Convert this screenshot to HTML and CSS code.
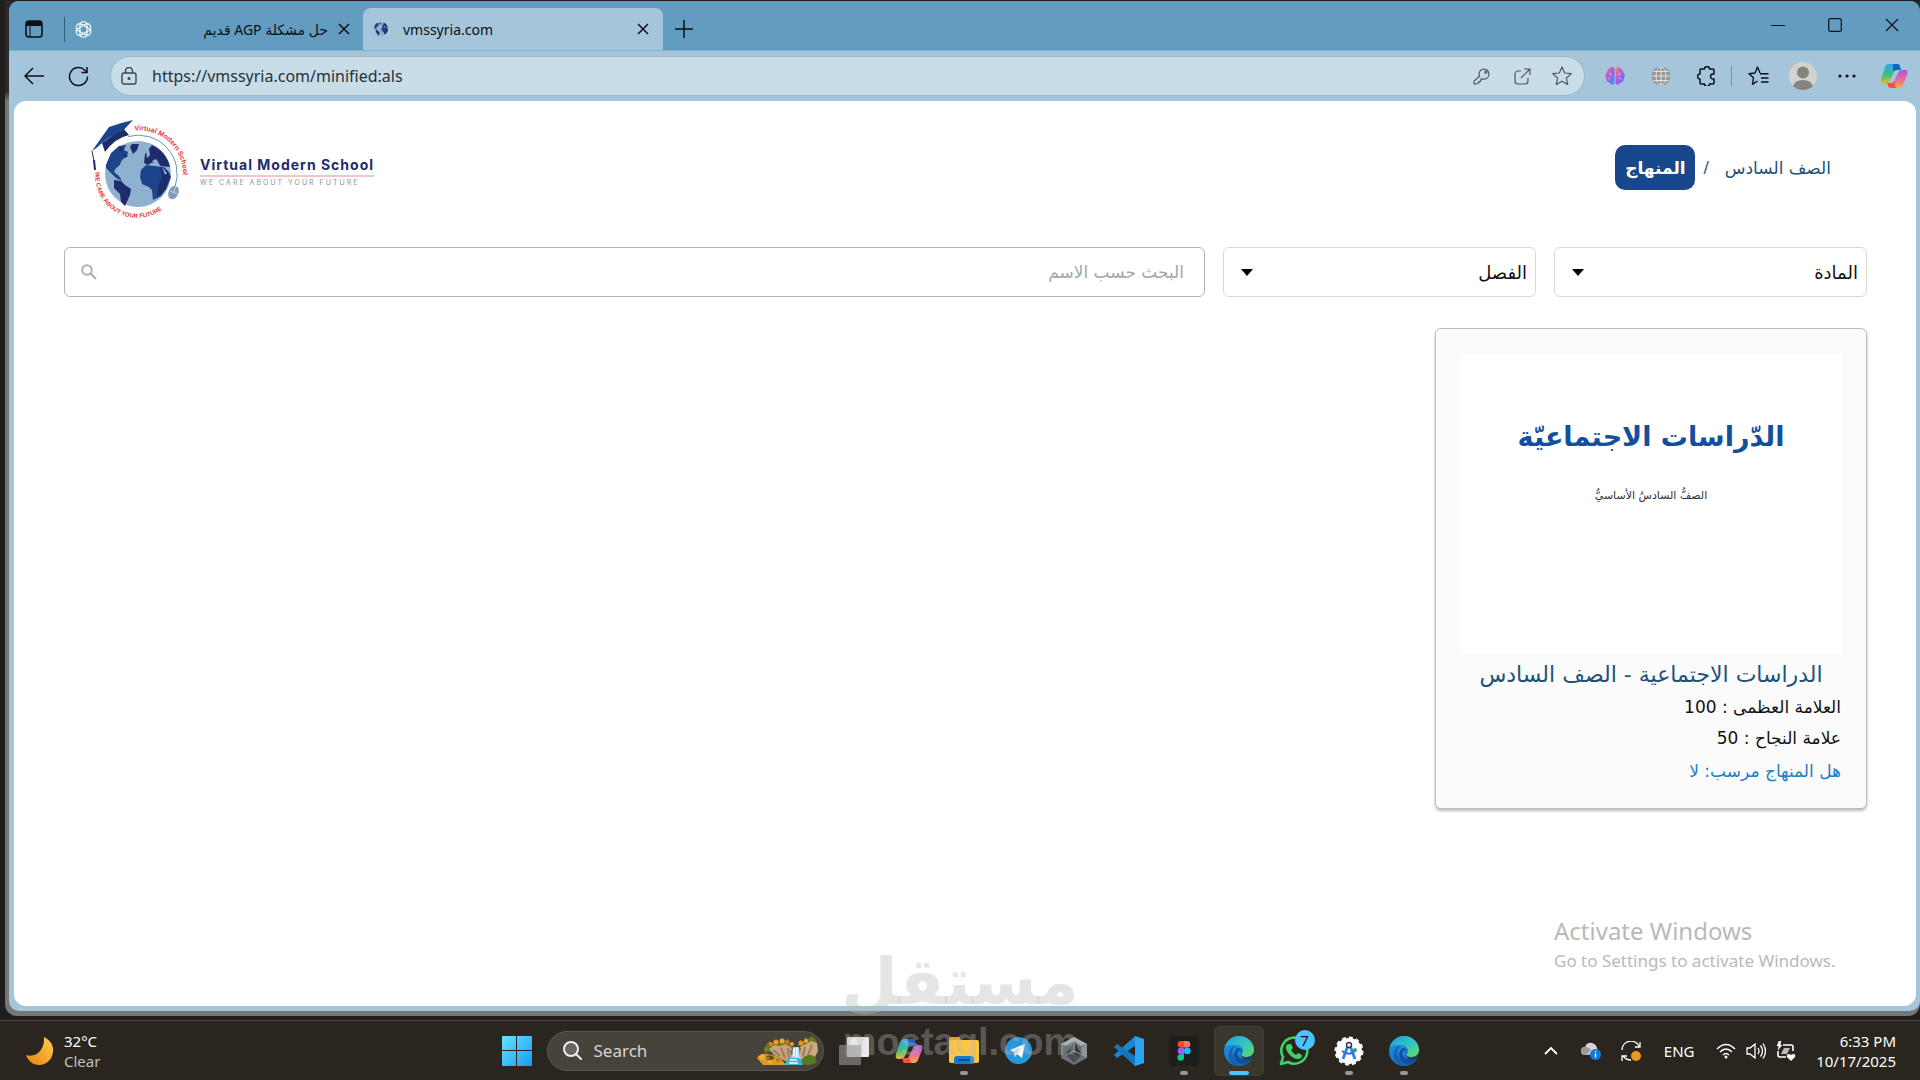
FILE: index.html
```html
<!DOCTYPE html>
<html lang="en">
<head>
<meta charset="utf-8">
<title>vmssyria.com</title>
<link rel="stylesheet" href="styles.css">
</head>
<body>
<svg class="defs" width="0" height="0" aria-hidden="true">
  <defs>
    <linearGradient id="edgeGreen" x1="0" y1="0" x2="1" y2="1"><stop offset="0" stop-color="#1c9de0"/><stop offset=".5" stop-color="#34c3c4"/><stop offset="1" stop-color="#62dc58"/></linearGradient>
    <linearGradient id="edgeBlue" x1="0" y1="0" x2="0" y2="1"><stop offset="0" stop-color="#1f93dd"/><stop offset="1" stop-color="#1678cd"/></linearGradient>
    <linearGradient id="copA" x1="0" y1="0" x2="0" y2="1"><stop offset="0" stop-color="#2aa7f0"/><stop offset=".55" stop-color="#3fbf83"/><stop offset="1" stop-color="#f0bd2d"/></linearGradient>
    <linearGradient id="copB" x1="0" y1="0" x2="0" y2="1"><stop offset="0" stop-color="#a25be8"/><stop offset=".55" stop-color="#ee6a97"/><stop offset="1" stop-color="#f8b13f"/></linearGradient>
    <linearGradient id="winTile" x1="0" y1="0" x2="1" y2="1"><stop offset="0" stop-color="#66e2ff"/><stop offset="1" stop-color="#1a9af0"/></linearGradient>
    <linearGradient id="brainFill" x1="0" y1="0" x2="1" y2="1"><stop offset="0" stop-color="#f2a03c"/><stop offset=".3" stop-color="#d65bc4"/><stop offset=".7" stop-color="#7b67f2"/><stop offset="1" stop-color="#25b5f5"/></linearGradient>
    <linearGradient id="moonFill" x1="1" y1="0" x2="0" y2="1"><stop offset="0" stop-color="#ffd05a"/><stop offset=".6" stop-color="#f0a022"/><stop offset="1" stop-color="#e8831f"/></linearGradient>
    <symbol id="edge" viewBox="0 0 30 30">
      <circle cx="15" cy="15" r="15" fill="url(#edgeBlue)"/>
      <path d="M1 11C3 4 9 0 15 0c9 0 15 7 15 14 0 5-4 7-8 7-3 0-5-1-4-3 3-5-1-9-6-9-5 0-9 0-11 2z" fill="url(#edgeGreen)"/>
      <path d="M12 9c-4 2-6 10 0 15 5 4 11 3 15 0-3 4-7 6-12 6C8 30 3 23 5 16c1-4 4-6 7-7z" fill="#1563b5"/>
      <path d="M17 14c-3 0-5 3-3 6 3 4 9 4 13 2 2-1 1 2 0 2-4 5-12 5-15 0-3-4-2-10 2-12 2 0 4 1 4 4 0 1-1 2-1 3z" fill="#124e9c"/>
      <path d="M18 18c-1 2 1 3 4 3s7-1 8-6c1 5-1 7-3 8-5 2-11 0-9-5z" fill="#2a261f" opacity=".7"/>
    </symbol>
    <symbol id="copilot" viewBox="0 0 28 26">
      <path d="M9 1h8c2 0 3 1 3 3l1 3h-4c-2 0-3 1-4 4l-3 7c-1 2-2 3-5 3H4c-3 0-4-2-3-5L5 4c1-2 2-3 4-3z" fill="url(#copA)"/>
      <path d="M13 1h4c2 0 3 1 3 3l1 3h-4c-2 0-3 1-4 2z" fill="#1565c2"/>
      <path d="M19 25h-8c-2 0-3-1-3-3l-1-2h4c2 0 3-1 4-4l3-6c1-2 2-3 5-3h2c3 0 3 2 2 5l-4 10c-1 2-2 3-4 3z" fill="url(#copB)"/>
      <path d="M7 20h4c2 0 2 0 3-2l2 7h-5c-2 0-3-1-3-3z" fill="#ee5340"/>
    </symbol>
    <symbol id="globe" viewBox="0 0 66 66">
      <circle cx="33" cy="33" r="33" fill="#8fb1d0"/>
      <path d="M1 24L6 12l8-7 7-1-2 5 4 2-1 4-5 4-3 6-3 2-2 4 5 4 3 5-6-3-6-6-4-4z" fill="#1d438a"/>
      <path d="M14 5l5 3-4 3zM19 13l4 2-3 2zM25 6l2-3 7 0-2 6-4 4z" fill="#1f2c6b"/>
      <path d="M9 39l7 1 4 4 6 4-1 6-5 11-4-4-1-8-6-6z" fill="#1f2c6b"/>
      <path d="M39 22l1-9 7-9c9 4 16 12 18 22l-9-1-4-4-6 1-3 2z" fill="#1f2c6b"/>
      <path d="M36 29l5-5 8 1 10 1 5 5 2 5-5 12-5 7-8 4-1-10-3-3-7-3-2-7z" fill="#1d438a"/>
      <path d="M55 26l7 3 3 8-4 11-9 9 1-12 4-8z" fill="#1f2c6b"/>
      <path d="M41 10l3-2 1 6-3 3zM47 20l4-2 3 4-2 2-3-2zM57 26l5 6-2 2z" fill="#8fb1d0"/>
    </symbol>
  </defs>
</svg>

<div class="desktop">
<div class="window">
  <div class="tabbar">
    <button class="icon-btn workspace" aria-label="Tab actions"><svg width="18" height="18" viewBox="0 0 18 18"><rect x="1" y="1" width="16" height="16" rx="3" fill="none" stroke="#0b1116" stroke-width="1.6"/><path d="M1 6V3q0-2 2-2h12q2 0 2 2v3z" fill="#0b1116"/><path d="M5 6v11" stroke="#0b1116"/></svg></button>
    <span class="tab-divider"></span>
    <div class="tab tab-idle">
      <svg width="17" height="17" viewBox="0 0 24 24" fill="none" stroke="#fff" stroke-width="1.500"><rect id="loop" x="7" y="1" width="10" height="22" rx="5"/><use href="#loop" transform="rotate(60 12 12)"/><use href="#loop" transform="rotate(120 12 12)"/></svg>
      <span class="tab-title" dir="rtl">حل مشكلة AGP قديم</span>
      <button class="icon-btn close" aria-label="Close tab"><svg width="12" height="12" viewBox="0 0 12 12"><path d="M1 1l10 10M11 1L1 11" stroke="#0b1116" stroke-width="1.500"/></svg></button>
    </div>
    <div class="tab tab-active">
      <svg width="14" height="14"><use href="#globe"/></svg>
      <span class="tab-title">vmssyria.com</span>
      <button class="icon-btn close" aria-label="Close tab"><svg width="12" height="12" viewBox="0 0 12 12"><path d="M1 1l10 10M11 1L1 11" stroke="#0b1116" stroke-width="1.500"/></svg></button>
    </div>
    <button class="icon-btn new-tab" aria-label="New tab"><svg width="18" height="18" viewBox="0 0 18 18"><path d="M9 0v18M0 9h18" stroke="#0b1116" stroke-width="1.500"/></svg></button>
    <div class="win-controls">
      <button class="icon-btn" aria-label="Minimize"><svg width="14" height="14" viewBox="0 0 14 14"><path d="M0 7.500h14" stroke="#0b1116"/></svg></button>
      <button class="icon-btn" aria-label="Maximize"><svg width="14" height="14" viewBox="0 0 14 14"><rect x=".7" y=".7" width="12.600" height="12.600" rx="1.500" fill="none" stroke="#0b1116" stroke-width="1.200"/></svg></button>
      <button class="icon-btn" aria-label="Close"><svg width="14" height="14" viewBox="0 0 14 14"><path d="M1 1l12 12M13 1L1 13" stroke="#0b1116" stroke-width="1.200"/></svg></button>
    </div>
  </div>

  <div class="toolbar">
    <button class="icon-btn nav" aria-label="Back"><svg width="20" height="18" viewBox="0 0 20 18" fill="none" stroke="#0b1116" stroke-width="1.500"><path d="M20 9H1M9 1L1 9l8 8"/></svg></button>
    <button class="icon-btn nav" aria-label="Reload"><svg width="21" height="21" viewBox="0 0 21 21" fill="none" stroke="#0b1116" stroke-width="1.500"><path d="M19.500 10.500a9 9 0 1 1-2.600-6.300L19 6M19 1v5.500h-5.500"/></svg></button>
    <div class="address">
      <svg width="16" height="18" viewBox="0 0 16 18" fill="none" stroke="#3d474d" stroke-width="1.400"><rect x="1" y="6" width="14" height="11" rx="2"/><path d="M4.500 6V4a3.500 3.500 0 0 1 7 0v2"/><circle cx="8" cy="11.500" r=".8" fill="#3d474d"/></svg>
      <input type="text" aria-label="Address" value="https://vmssyria.com/minified:als">
      <div class="address-icons">
        <button class="icon-btn" aria-label="Passwords"><svg width="18" height="18" viewBox="0 0 18 18" fill="none" stroke="#4c5860" stroke-width="1.200"><path d="M6.500 9.300A5 5 0 1 1 9 11.700L7.500 13v1.500H6V16H4.500l-1 1H1v-3z"/><circle cx="12.800" cy="5.200" r="1"/></svg></button>
        <button class="icon-btn" aria-label="Open in app"><svg width="17" height="17" viewBox="0 0 17 17" fill="none" stroke="#4c5860" stroke-width="1.200"><path d="M7 3H4a3 3 0 0 0-3 3v7a3 3 0 0 0 3 3h7a3 3 0 0 0 3-3v-3M10 1h6v6M16 1L7 10"/></svg></button>
        <button class="icon-btn" aria-label="Add to favourites"><svg width="20" height="20" viewBox="0 0 20 20" fill="none" stroke="#4c5860" stroke-width="1.200" stroke-linejoin="round"><path d="M10 1l2.700 6 6.500.7-4.900 4.400 1.400 6.400L10 15.200l-5.700 3.300 1.400-6.400L.8 7.700 7.300 7z"/></svg></button>
      </div>
    </div>
    <div class="extensions">
      <button class="icon-btn" aria-label="Brain extension"><svg width="20" height="20" viewBox="0 0 20 20"><path d="M9.500 2Q7 0 5 2 2 3 2 6-1 9 1 12q0 4 4 5 2 3 4.500 1z" fill="url(#brainFill)"/><path d="M10.500 2Q13 0 15 2q3 1 3 4 3 3 1 6 0 4-4 5-2 3-4.500 1z" fill="url(#brainFill)"/><path d="M4 7q3 0 2 3M3 13l3-1M16 7q-3 0-2 3M17 13l-3-1" stroke="#a4c5da" fill="none"/></svg></button>
      <button class="icon-btn" aria-label="Globe extension"><svg width="20" height="20" viewBox="0 0 20 20" fill="none" stroke="#e3e3e3"><circle cx="10" cy="10" r="9.500" fill="#979797" stroke="none"/><path d="M10 1v18M1 10h18M2.500 5.500h15M2.500 14.500h15"/><ellipse cx="10" cy="10" rx="5" ry="9"/></svg></button>
      <button class="icon-btn" aria-label="Extensions"><svg width="20" height="20" viewBox="0 0 20 20" fill="none" stroke="#0b1116" stroke-width="1.500" stroke-linejoin="round"><path d="M4 3h3.500a2.500 2.500 0 0 1 5 0H16q1 0 1 1v4h-1a2.400 2.400 0 0 0 0 5h1v4q0 1-1 1h-3.500a2.500 2.500 0 0 1-5 0H4q-1 0-1-1v-4a2.500 2.500 0 0 1 0-5V4q0-1 1-1z"/></svg></button>
      <span class="tool-divider"></span>
      <button class="icon-btn" aria-label="Favourites"><svg width="21" height="20" viewBox="0 0 21 20" fill="none" stroke="#0b1116" stroke-width="1.400" stroke-linejoin="round"><path d="M12 7L9.500 1 7 7l-6 .8 4.500 4-1 6.500L9.500 15M12 7.800h8.500M13 12h7.500M13 16h7.500"/></svg></button>
      <button class="icon-btn" aria-label="Profile"><svg width="28" height="28" viewBox="0 0 28 28"><circle cx="14" cy="14" r="14" fill="#d3d2d0"/><circle cx="14" cy="10.500" r="6" fill="#86837f"/><path d="M4 24q2-6 10-6t10 6q-4 4-10 4T4 24z" fill="#86837f"/></svg></button>
      <button class="icon-btn" aria-label="More"><svg width="18" height="4" viewBox="0 0 18 4" fill="#0b1116"><circle cx="2" cy="2" r="1.600"/><circle cx="9" cy="2" r="1.600"/><circle cx="16" cy="2" r="1.600"/></svg></button>
      <button class="icon-btn" aria-label="Copilot"><svg width="28" height="26"><use href="#copilot"/></svg></button>
    </div>
  </div>

  <main class="page" dir="rtl" lang="ar">
    <header class="site-header">
      <nav class="crumbs">
        <a href="#" class="crumb">الصف السادس</a>
        <span class="sep">/</span>
        <a href="#" class="crumb-current">المنهاج</a>
      </nav>
      <a href="#" class="brand" dir="ltr" lang="en">
        <svg width="100" height="100" viewBox="0 0 100 100">
          <defs>
            <path id="arcTop" d="M44.500 12.500A44 44 0 0 1 92 66"/>
            <path id="arcBottom" d="M5.500 54A42 42 0 0 0 83 80"/>
          </defs>
          <path d="M38 18.500A39 39 0 0 1 85 69" fill="none" stroke="#6f93b3" stroke-width="1"/>
          <use href="#globe" x="15" y="23" width="66" height="66"/>
          <path d="M12 25L33 10l6 7q-14 3-24 17z" fill="#1f2c6b"/>
          <path d="M2 33L19 9q11-4 24-7-5 5-10 11Q20 18 12 25q-5 5-10 8z" fill="#1a478c"/>
          <path d="M2 33l2 10" stroke="#1f2c6b" fill="none"/><path d="M3 42h2l1 10H4z" fill="#1f2c6b"/>
          <ellipse cx="83.500" cy="74.500" rx="5" ry="7" transform="rotate(25 83.500 74.500)" fill="#7f9dba"/>
          <path d="M80 73l8 3M86 68l-2 6" stroke="#dbe6f0" stroke-width=".7"/>
          <text class="ring ring-top"><textPath href="#arcTop">Virtual Modern School</textPath></text>
          <text class="ring ring-bottom"><textPath href="#arcBottom">WE CARE ABOUT YOUR FUTURE</textPath></text>
        </svg>
        <span class="brand-text">
          <span class="brand-name">Virtual Modern School</span>
          <span class="brand-tag">WE CARE ABOUT YOUR FUTURE</span>
        </span>
      </a>
    </header>

    <form class="filters">
      <div class="select-box">
        <select aria-label="المادة"><option>المادة</option></select>
        <svg width="12" height="7" viewBox="0 0 12 7"><path d="M0 0h12L6 7z" fill="#000"/></svg>
      </div>
      <div class="select-box">
        <select aria-label="الفصل"><option>الفصل</option></select>
        <svg width="12" height="7" viewBox="0 0 12 7"><path d="M0 0h12L6 7z" fill="#000"/></svg>
      </div>
      <label class="search-box">
        <input type="text" placeholder="البحث حسب الاسم" aria-label="البحث حسب الاسم">
        <svg width="16" height="16" viewBox="0 0 16 16" fill="none" stroke="#adadad" stroke-width="2"><circle cx="6" cy="6" r="4.800"/><path d="M9.500 9.500l5.500 5.500"/></svg>
      </label>
    </form>

    <section class="cards">
      <article class="card">
        <div class="cover">
          <div class="cover-title">الدّراسات الاجتماعيّة</div>
          <div class="cover-sub">الصفُّ السادسُ الأساسيُّ</div>
        </div>
        <h2>الدراسات الاجتماعية - الصف السادس</h2>
        <p>العلامة العظمى : 100</p>
        <p>علامة النجاح : 50</p>
        <p class="carried">هل المنهاج مرسب: لا</p>
      </article>
    </section>
  </main>
</div>
</div>

<div class="activate"><div class="activate-title">Activate Windows</div><div class="activate-sub">Go to Settings to activate Windows.</div></div>

<footer class="taskbar">
  <button class="weather">
    <svg width="28" height="28" viewBox="0 0 28 28"><path d="M18 0c6 3 10 8 9 15-1 8-7 13-14 13C7 28 2 24 0 18c9 3 19-4 18-18z" fill="url(#moonFill)"/></svg>
    <span class="two-lines"><span>32°C</span><span class="dim">Clear</span></span>
  </button>

  <div class="apps">
    <button class="app" aria-label="Start"><svg width="30" height="30" viewBox="0 0 30 30" fill="url(#winTile)"><path d="M0 1q0-1 1-1h13v14H0zM15 0h14q1 0 1 1v13H15zM0 15h14v15H1q-1 0-1-1zM15 15h15v14q0 1-1 1H15z"/></svg></button>
    <label class="task-search">
      <svg width="19" height="19" viewBox="0 0 19 19" fill="none" stroke="#eee" stroke-width="2"><circle cx="8" cy="8" r="7" fill="#68655f"/><path d="M13 13l5 5" stroke-linecap="round"/></svg>
      <input type="text" placeholder="Search" aria-label="Search">
      <svg width="62" height="30" viewBox="0 0 62 30">
        <path d="M7 17l2-8 3-4 3 5 2-5 3-1 2 3 3-5 3 3 3-3 3 6 2 4zM41 10l2-6 3 2 2-5 3 2 4-3 3 3 2 3-4 5z" fill="#6c7426"/>
        <circle cx="14" cy="8" r="2" fill="#e9831f"/><circle cx="19" cy="6" r="2.500" fill="#f29a24"/><circle cx="25" cy="5" r="2.500" fill="#f5a92c"/><circle cx="30" cy="6" r="2" fill="#d96f1c"/><circle cx="35" cy="8" r="2" fill="#f29a24"/><circle cx="44" cy="7" r="2.500" fill="#ef8f22"/><circle cx="49" cy="5" r="2" fill="#f5a92c"/><circle cx="9" cy="13" r="2" fill="#75802b"/>
        <path d="M12 13l5-4 6 1 5-2 6 3 3 6-3 10-8-3-9-5z" fill="#c2a37c"/>
        <path d="M43 11l6-3 5-3 6 2 1 8-4 8-9 2-5-3z" fill="#cbaa80"/>
        <path d="M16 14l7 6M24 12l4 10M31 12l1 11M48 11l-2 9M55 9l-4 10" stroke="#9b7b58" stroke-width="2"/>
        <path d="M35 20l-2-6 4 1zM41 13l3-1-2 9z" fill="#70573d"/>
        <path d="M36 11h6l1 10q3 4 2 8H28q2-5 7-8z" fill="#a9dcf0"/>
        <path d="M28 29q0-5 6-7h8q4 3 4 7z" fill="#3fb4d8"/>
        <path d="M37 12v8M40 12v9M33 24h7M32 27h9" stroke="#eefaff" stroke-width="1.500"/>
        <path d="M0 22q3-5 10-4 9 1 14 5l5 6H6z" fill="#dd9a2a"/>
        <path d="M9 20q5-2 9 2-4 3-8 2z" fill="#4e561a"/><circle cx="5" cy="21" r="2.500" fill="#f5ad2b"/><circle cx="13" cy="26" r="2" fill="#f5ad2b"/><circle cx="21" cy="24" r="2" fill="#c96d1d"/><circle cx="11" cy="22" r="1.500" fill="#d8671b"/>
        <path d="M44 26q2-8 10-7 5 1 6 7-3 3-10 3-4 0-6-3z" fill="#57791f"/>
      </svg>
    </label>
    <button class="app" aria-label="Task view"><svg width="30" height="28" viewBox="0 0 30 28"><rect y="8" width="22" height="20" rx="1" fill="#6c6a68"/><rect x="8" width="22" height="20" rx="1" fill="#e9e9e9"/><rect x="8" y="8" width="14" height="12" fill="#b4b4b4"/></svg></button>
    <button class="app" aria-label="Copilot"><svg width="28" height="26"><use href="#copilot"/></svg></button>
    <button class="app running" aria-label="File Explorer"><svg width="30" height="27" viewBox="0 0 30 27"><path d="M0 2q0-2 2-2h8l2 3H0z" fill="#e8a51c"/><path d="M0 3h28q2 0 2 2v19q0 2-2 2H2q-2 0-2-2z" fill="#ffc63f"/><path d="M5 27v-5q0-3 3-3h14q3 0 3 3v5z" fill="#1379d0"/><path d="M9 23h12" stroke="#0b4f8c" stroke-width="2"/></svg></button>
    <button class="app" aria-label="Telegram"><svg width="27" height="27" viewBox="0 0 27 27"><circle cx="13.500" cy="13.500" r="13.500" fill="#2697db"/><path d="M5 13l15-6-3 14-5-4-2 3-1-5z" fill="#fff"/><path d="M9 15l8-5-5 7-2 3z" fill="#c9dfef"/></svg></button>
    <button class="app" aria-label="Unity"><svg width="26" height="28" viewBox="0 0 26 28"><path d="M13 0l13 7v14l-13 7-13-7V7z" fill="#6b7177"/><path d="M13 0l13 7-6 2-7-5-8 5-5-2z" fill="#a8afb5"/><path d="M13 4l8 14H5z" fill="#32383e"/><path d="M5 18h16l-8 8z" fill="#4a5056"/><path d="M13 4v10l-8 4M13 14l8 4" stroke="#9da4aa" fill="none"/><path d="M21 10l5-3v14l-6-3z" fill="#8e959b"/></svg></button>
    <button class="app" aria-label="Visual Studio Code"><svg width="30" height="30" viewBox="0 0 30 30"><path d="M21 0L0 19l3 3L24 8z" fill="#1d86d0"/><path d="M21 30L0 11l3-3 21 14z" fill="#1476bf"/><path d="M21 0l9 3v24l-9 3z" fill="#2ba5f2"/></svg></button>
    <button class="app running" aria-label="Figma"><svg width="30" height="30" viewBox="0 0 30 30"><rect width="30" height="30" rx="3" fill="#1e1e1e"/><path d="M15 5h-3a3.300 3.300 0 0 0 0 6.600h3z" fill="#f24e1e"/><path d="M15 5h3a3.300 3.300 0 0 1 0 6.600h-3z" fill="#ff7262"/><path d="M15 11.600h-3a3.300 3.300 0 0 0 0 6.600h3z" fill="#a259ff"/><circle cx="18.300" cy="14.900" r="3.300" fill="#1abcfe"/><path d="M15 18.200h-3a3.300 3.300 0 1 0 3 3.300z" fill="#0acf83"/></svg></button>
    <button class="app running current" aria-label="Microsoft Edge"><svg width="30" height="30"><use href="#edge"/></svg></button>
    <button class="app" aria-label="WhatsApp"><svg width="30" height="30" viewBox="0 0 30 30"><path d="M2 28l2-7a13 13 0 1 1 5 5z" fill="none" stroke="#3bd366" stroke-width="2.600" stroke-linejoin="round"/><path d="M10 8l2 0 2 4-2 2q2 4 5 5l2-2 4 2q0 4-4 4-5 0-9-5t-3-8q1-2 3-2z" fill="#3bd366"/></svg><span class="badge">7</span></button>
    <button class="app running" aria-label="Android Studio"><svg width="30" height="30" viewBox="0 0 30 30"><circle cx="15" cy="15" r="13" fill="#fff"/><circle cx="15" cy="15" r="13.500" fill="none" stroke="#fff" stroke-width="2" stroke-dasharray="4 3"/><path d="M15 7L9 23M15 7l6 16" stroke="#2f86f0" stroke-width="3"/><path d="M8 15q7 6 14-1" fill="none" stroke="#3a6fd8" stroke-width="2"/><circle cx="21" cy="14" r="2" fill="#35a853"/><circle cx="15" cy="9" r="2.500" fill="#fff" stroke="#353b44" stroke-width="1.500"/></svg></button>
    <button class="app running" aria-label="Microsoft Edge"><svg width="30" height="30"><use href="#edge"/></svg></button>
  </div>

  <div class="tray">
    <button class="icon-btn" aria-label="Hidden icons"><svg width="14" height="9" viewBox="0 0 14 9"><path d="M1 8l6-6 6 6" fill="none" stroke="#fff" stroke-width="1.800"/></svg></button>
    <button class="icon-btn" aria-label="OneDrive"><svg width="20" height="18" viewBox="0 0 20 18"><path d="M4 13q-4 0-4-4t4-4q2-5 7-4 4 1 5 5l2 6z" fill="#d5d5d5"/><path d="M4 5q4 0 6 3l-5 5H4q-4 0-4-4t4-4z" fill="#9a9a9a"/><circle cx="14.500" cy="12.500" r="5.500" fill="#0f7bd6"/><path d="M14.500 11.500v4M14.500 9v1.300" stroke="#fff" stroke-width="1.300"/></svg></button>
    <button class="icon-btn" aria-label="Windows Update"><svg width="20" height="20" viewBox="0 0 20 20" fill="none" stroke="#fff" stroke-width="1.300"><path d="M1 9a9 9 0 0 1 17-4M19 1v5h-5M10 19Q5 19 2 15M1 20v-5h5"/><circle cx="15" cy="15" r="5" fill="#e99a22" stroke="none"/></svg></button>
    <button class="lang">ENG</button>
    <button class="quick" aria-label="Network, volume and battery">
      <svg width="20" height="16" viewBox="0 0 20 16" fill="none" stroke="#fff" stroke-width="1.500"><path d="M1 6q9-9 18 0M4 9q6-6 12 0M7 12q3-3 6 0"/><circle cx="10" cy="14" r="1.500" fill="#fff" stroke="none"/></svg>
      <svg width="20" height="18" viewBox="0 0 20 18" fill="none" stroke="#fff" stroke-width="1.300"><path d="M1 6h3l5-4v14l-5-4H1zM12 6q2 3 0 6M14.500 3.500q4 5.500 0 11M17 1.500q5 7.500 0 15"/></svg>
      <svg width="20" height="20" viewBox="0 0 20 20" fill="none" stroke="#fff" stroke-width="1.600"><path d="M7 4h8q2 0 2 2v4M10 16H4q-2 0-2-2v-4"/><path d="M3 0L1 5h2L2 9l4-5H4l1-4z" fill="#fff" stroke-width=".5"/><path d="M5 13l3-6h6l-3 6z" fill="#bbb" stroke="none"/><path d="M15 20l-4-4q-1-3 2-3l2 1 2-1q3 0 2 3z" fill="#fff" stroke="none"/></svg>
    </button>
    <button class="clock two-lines"><span>6:33 PM</span><span>10/17/2025</span></button>
  </div>
</footer>

<div class="watermark" aria-hidden="true"><div class="wm-ar" lang="ar" dir="rtl">مستقل</div><div class="wm-en">mostaql.com</div></div>
</body>
</html>
```

FILE: styles.css
```css
* { box-sizing: border-box; }

body {
  margin: 0;
  min-height: 100vh;
  display: flex;
  flex-direction: column;
  position: relative;
  background: #1f1e1c;
  font-family: "Noto Sans", "DejaVu Sans", sans-serif;
  color: #0b1116;
  overflow: hidden;
}

.defs { position: absolute; }

button {
  font: inherit;
  color: inherit;
  background: none;
  border: 0;
  padding: 0;
}

svg { display: block; flex: none; }

.icon-btn {
  display: flex;
  align-items: center;
  justify-content: center;
}

/* Browser window */
.desktop {
  flex: 1;
  display: flex;
  margin: 1px 0 4px 5px;
  padding: 0 0 5px 4px;
  background: linear-gradient(#2b2a29 0, #2b2a29 90px, #767676 100px);
  border-radius: 0 0 12px 12px;
}

.window {
  flex: 1;
  min-width: 0;
  display: flex;
  flex-direction: column;
  background: #a4c5da;
  border-radius: 10px;
}

.tabbar {
  display: flex;
  align-items: center;
  height: 50px;
  padding-top: 7px;
  background: #629cc0;
  border-bottom: 1px solid #81b0cd;
  border-radius: 10px 10px 0 0;
  font-size: 14px;
}

.workspace { width: 50px; }
.tab-divider { width: 1px; height: 25px; margin-left: 5px; background: #2f5f80; }

.tab { display: flex; align-items: center; height: 42px; }
.tab-title { flex: 1; white-space: nowrap; }
.tab .close { width: 18px; }
.tab-idle { width: 298px; padding: 0 10px; gap: 7px; }
.tab-active {
  width: 300px;
  padding: 0 11px;
  gap: 15px;
  background: #a4c5da;
  border-radius: 8px 8px 0 0;
}
.new-tab { width: 42px; }

.win-controls { display: flex; margin-left: auto; height: 36px; align-self: flex-start; }
.win-controls .icon-btn { width: 57px; height: 34px; }

.toolbar {
  display: flex;
  align-items: center;
  height: 50px;
  padding: 0 10px 0 2px;
}
.nav { width: 45px; }
.address {
  flex: 1;
  display: flex;
  align-items: center;
  height: 40px;
  margin-left: 9px;
  padding: 0 11px 0 10px;
  gap: 15px;
  background: #c9dde8;
  border: 1px solid #9fb5c3;
  border-radius: 20px;
}
.address input {
  flex: 1;
  min-width: 0;
  padding: 0;
  border: 0;
  background: none;
  font: 16px "Noto Sans", sans-serif;
  color: #263238;
}
.address-icons { display: flex; }
.address-icons .icon-btn { width: 40px; }
.address-icons .icon-btn:last-child { width: 22px; margin-left: 9px; }

.extensions { display: flex; align-items: center; }
.extensions .icon-btn { width: 46px; }
.extensions .icon-btn:first-child { width: 60px; }
.extensions .icon-btn:nth-child(2) { width: 32px; }
.extensions .icon-btn:nth-child(3) { width: 60px; }
.extensions .icon-btn:nth-child(6) { width: 43px; }
.extensions .icon-btn:last-child { width: 32px; margin-left: 8px; }
.tool-divider { width: 1px; height: 20px; margin: 0 3px 0 -6px; background: #6d97b1; }

/* Site */
.page {
  flex: 1;
  margin: 0 4px 5px 5px;
  padding: 13px 49px 24px 50px;
  background: #fff;
  border-radius: 12px;
  font-family: "DejaVu Sans", sans-serif;
  color: #111;
}

.site-header {
  display: flex;
  align-items: center;
  justify-content: space-between;
  min-height: 133px;
  padding: 0 36px 26px 26px;
}
.crumbs { display: flex; align-items: center; gap: 8px; }
.crumbs a { text-decoration: none; }
.crumb { font-size: 17px; color: #1f5279; margin-left: 8px; }
.sep { color: #1f5279; }
.crumb-current {
  display: flex;
  align-items: center;
  justify-content: center;
  width: 80px;
  height: 45px;
  border-radius: 10px;
  background: #18478b;
  color: #fff;
  font-size: 17px;
  font-weight: bold;
}

.brand {
  display: flex;
  align-items: center;
  gap: 10px;
  text-decoration: none;
  font-family: Inter, "Liberation Sans", sans-serif;
}
.ring { fill: #e8353b; font-family: "Liberation Sans", sans-serif; font-weight: bold; }
.ring-top { font-size: 7px; }
.ring-bottom { font-size: 6px; }
.brand-text { display: flex; flex-direction: column; padding-top: 8px; }
.brand-name {
  padding-bottom: 1px;
  border-bottom: 2px solid #f6c5cb;
  font-size: 14px;
  font-weight: bold;
  line-height: 18px;
  letter-spacing: 1px;
  color: #1f2c6b;
}
.brand-tag { margin-top: 1px; font-size: 7px; line-height: 10px; letter-spacing: 2px; color: #8d929c; }

.filters { display: flex; gap: 18px; }
.select-box { position: relative; width: 313px; }
.select-box select {
  width: 100%;
  height: 50px;
  padding: 0 8px;
  appearance: none;
  border: 1px solid #d9d9d9;
  border-radius: 6px;
  background: #fff;
  font: 18px "DejaVu Sans", sans-serif;
  color: #111;
}
.select-box svg { position: absolute; left: 18px; top: 22px; }
.search-box {
  flex: 1;
  display: flex;
  align-items: center;
  height: 50px;
  padding: 0 20px 0 16px;
  border: 1px solid #b3b3b3;
  border-radius: 6px;
}
.search-box input {
  flex: 1;
  min-width: 0;
  padding: 0;
  border: 0;
  background: none;
  font: 17px "DejaVu Sans", sans-serif;
}
.search-box input::placeholder { color: #a5a5a5; opacity: 1; }

.cards { display: flex; margin-top: 31px; }
.card {
  width: 432px;
  padding: 25px 25px 20px;
  border: 1px solid #bdbdbd;
  border-radius: 6px;
  background: #fbfbfb;
  box-shadow: 0 2px 3px #bbb;
}
.cover {
  height: 300px;
  padding-top: 63px;
  background: #fff;
  text-align: center;
}
.cover-title { font-size: 27px; line-height: 40px; font-weight: bold; color: #124f9c; }
.cover-sub {
  margin-top: 27px;
  font-size: 11px;
  line-height: 24px;
  color: #333;
}
.card h2 {
  margin: 4px 0 0;
  font-size: 22px;
  font-weight: normal;
  line-height: 34px;
  text-align: center;
  white-space: nowrap;
  color: #1f5279;
}
.card p { margin: 0; font-size: 17px; line-height: 31px; }
.card .carried { color: #1c80c5; line-height: 34px; }

/* Overlays */
.activate { position: absolute; left: 1554px; bottom: 106px; color: #b9b9b9; }
.activate-title { font-size: 24px; line-height: 34px; }
.activate-sub { font-size: 17px; line-height: 26px; }

.watermark {
  position: absolute;
  left: 0;
  right: 0;
  bottom: 16px;
  text-align: center;
  pointer-events: none;
  color: rgba(180, 184, 184, .36);
}
.wm-ar { font: bold 65px "DejaVu Sans", sans-serif; line-height: 76px; }
.wm-en { font: bold 38px "Liberation Sans", sans-serif; line-height: 44px; }

/* Taskbar */
.taskbar {
  display: grid;
  grid-template-columns: 1fr auto 1fr;
  height: 60px;
  border-top: 1px solid #494744;
  background: #2a261f;
  color: #fff;
  font-size: 15px;
}
.weather { display: flex; align-items: center; gap: 10px; padding-left: 26px; text-align: left; }
.two-lines { display: flex; flex-direction: column; line-height: 20px; }
.dim { color: #c3c1be; }

.apps { display: flex; align-items: center; gap: 5px; }
.app {
  position: relative;
  display: flex;
  align-items: center;
  justify-content: center;
  width: 50px;
  height: 50px;
  border-radius: 5px;
}
.running::after {
  content: "";
  position: absolute;
  left: 21px;
  bottom: 1px;
  width: 8px;
  height: 4px;
  border-radius: 2px;
  background: #989694;
}
.current { background: #39362c; border: 1px solid #423f35; }
.current::after { left: 14px; bottom: 0; width: 20px; background: #4cc2ff; }
.badge {
  position: absolute;
  right: 4px;
  top: 4px;
  width: 20px;
  height: 20px;
  border-radius: 50%;
  background: #4cc2ff;
  color: #111;
  font-size: 15px;
  line-height: 20px;
  text-align: center;
}
.task-search {
  display: flex;
  align-items: center;
  width: 277px;
  height: 40px;
  gap: 12px;
  padding: 0 4px 0 15px;
  border: 1px solid #5b5750;
  border-radius: 20px;
  background: #47433b;
}
.task-search input {
  flex: 1;
  min-width: 0;
  padding: 0;
  border: 0;
  background: none;
  font: 17px "Noto Sans", sans-serif;
  color: #fff;
}
.task-search input::placeholder { color: #d5d4d2; opacity: 1; }

.tray { display: flex; align-items: center; justify-content: flex-end; padding-right: 24px; }
.tray .icon-btn { width: 40px; }
.lang { width: 56px; }
.quick { display: flex; align-items: center; gap: 10px; margin: 0 20px 0 9px; }
.clock { text-align: right; }
```
